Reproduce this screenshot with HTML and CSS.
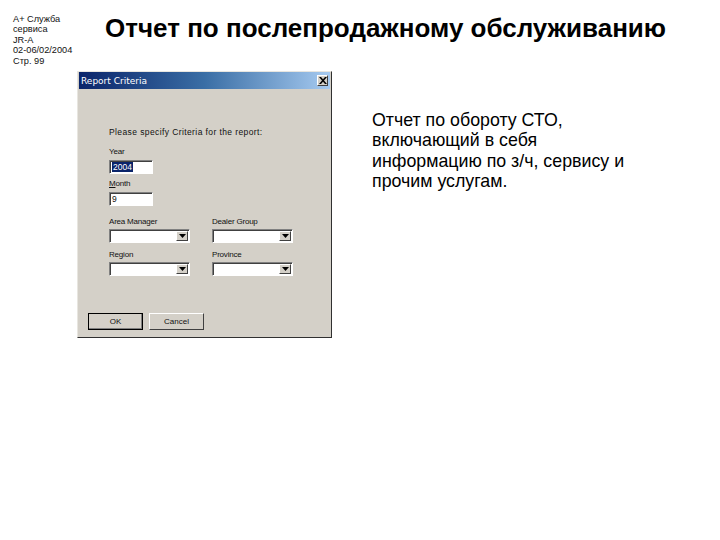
FILE: index.html
```html
<!DOCTYPE html>
<html>
<head>
<meta charset="utf-8">
<link rel="stylesheet" href="styles.css">
</head>
<body>
<div class="page">
  <header class="header">
    <div class="meta">
      <div>А+ Служба</div>
      <div>сервиса</div>
      <div>JR-A</div>
      <div>02-06/02/2004</div>
      <div>Стр. 99</div>
    </div>
    <h1 class="title">Отчет по послепродажному обслуживанию</h1>
  </header>
  <main class="content">
    <div class="dialog">
      <div class="titlebar">
        <span class="caption">Report Criteria</span>
        <span class="close">
          <svg width="8" height="7" viewBox="0 0 8 7"><path d="M0 0h2l2 2.3L6 0h2L5 3.5 8 7H6L4 4.7 2 7H0l3-3.5z" fill="#000"/></svg>
        </span>
      </div>
      <div class="dbody">
        <div class="prompt">Please specify Criteria for the report:</div>
        <div class="field">
          <label>Year</label>
          <div class="input"><span class="sel">2004</span></div>
        </div>
        <div class="field">
          <label><u>M</u>onth</label>
          <div class="input">9</div>
        </div>
        <div class="grid">
          <div class="field">
            <label>Area Manager</label>
            <div class="combo"><span class="arrow"><svg width="7" height="4" viewBox="0 0 7 4"><path d="M0 0h7L3.5 4z" fill="#000"/></svg></span></div>
          </div>
          <div class="field">
            <label>Dealer Group</label>
            <div class="combo"><span class="arrow"><svg width="7" height="4" viewBox="0 0 7 4"><path d="M0 0h7L3.5 4z" fill="#000"/></svg></span></div>
          </div>
          <div class="field">
            <label>Region</label>
            <div class="combo"><span class="arrow"><svg width="7" height="4" viewBox="0 0 7 4"><path d="M0 0h7L3.5 4z" fill="#000"/></svg></span></div>
          </div>
          <div class="field">
            <label>Province</label>
            <div class="combo"><span class="arrow"><svg width="7" height="4" viewBox="0 0 7 4"><path d="M0 0h7L3.5 4z" fill="#000"/></svg></span></div>
          </div>
        </div>
        <div class="buttons">
          <div class="btn default">OK</div>
          <div class="btn">Cancel</div>
        </div>
      </div>
    </div>
    <p class="desc">Отчет по обороту СТО, включающий в себя информацию по з/ч, сервису и прочим услугам.</p>
  </main>
</div>
</body>
</html>
```
FILE: styles.css
```css
html, body {
  margin: 0;
  padding: 0;
  background: #fff;
}
.page {
  width: 720px;
  height: 540px;
  font-family: "Liberation Sans", Arial, sans-serif;
  color: #000;
}
.header {
  display: flex;
  align-items: flex-start;
  height: 71px;
  box-sizing: border-box;
  padding: 3px 0 0 13px;
}
.meta {
  width: 92px;
  margin-top: 11px;
  font-size: 9.2px;
  line-height: 10.4px;
  color: #111;
}
.title {
  margin: 10px 0 0 0;
  font-size: 26px;
  font-weight: bold;
  line-height: 30px;
  white-space: nowrap;
}
.content {
  display: flex;
  align-items: flex-start;
  padding: 0 0 0 77px;
}
.dialog {
  width: 253px;
  height: 265px;
  background: #d4d0c8;
  border: 1px solid;
  border-color: #e8e6e0 #303030 #303030 #e8e6e0;
  display: flex;
  flex-direction: column;
}
.titlebar {
  height: 17px;
  margin: 0 1px 0 1px;
  background: linear-gradient(to right, #0a246a 0%, #3a6ea5 50%, #a6caf0 100%);
  display: flex;
  align-items: center;
  justify-content: space-between;
  padding: 0 2px 0 2px;
}
.caption {
  color: #fff;
  font-size: 9px;
  font-family: "DejaVu Sans", sans-serif;
}
.close {
  width: 11px;
  height: 11px;
  background: #d4d0c8;
  border: 1px solid;
  border-color: #fff #404040 #404040 #fff;
  display: flex;
  align-items: center;
  justify-content: center;
  box-sizing: border-box;
}
.dbody {
  padding: 38px 0 0 31px;
  font-size: 8px;
  color: #111;
  display: flex;
  flex-direction: column;
}
.prompt {
  font-size: 8.5px;
  line-height: 10px;
  margin-bottom: 9px;
  letter-spacing: 0.4px;
}
.field label {
  display: block;
  height: 11px;
  line-height: 11px;
  margin-bottom: 3px;
  letter-spacing: -0.2px;
}
.field {
  margin-bottom: 4px;
}
.input {
  width: 44px;
  height: 14px;
  background: #fff;
  border: 1px solid;
  border-color: #808080 #fff #fff #808080;
  box-sizing: border-box;
  font-size: 8.5px;
  line-height: 12px;
  padding-left: 2px;
  box-shadow: inset 1px 1px 0 #404040;
}
.sel {
  background: #0a246a;
  color: #fff;
  padding: 0 1px;
}
.grid {
  display: grid;
  grid-template-columns: 103px 81px;
  margin-top: 6px;
}
.grid .field {
  margin-bottom: 6px;
}
.grid .field label {
  margin-bottom: 2px;
}
.combo {
  width: 81px;
  height: 14px;
  background: #fff;
  border: 1px solid;
  border-color: #808080 #fff #fff #808080;
  box-sizing: border-box;
  box-shadow: inset 1px 1px 0 #404040;
  display: flex;
  justify-content: flex-end;
  padding: 1px;
}
.arrow {
  width: 12px;
  height: 10px;
  background: #d4d0c8;
  border: 1px solid;
  border-color: #fff #404040 #404040 #fff;
  box-sizing: border-box;
  display: flex;
  align-items: center;
  justify-content: center;
}
.buttons {
  display: flex;
  gap: 6px;
  margin: 31px 0 0 -21px;
}
.btn {
  width: 55px;
  height: 17px;
  box-sizing: border-box;
  border: 1px solid;
  border-color: #fff #404040 #404040 #fff;
  text-align: center;
  line-height: 15px;
  font-size: 8px;
}
.btn.default {
  outline: 1px solid #000;
  outline-offset: -1px;
  box-shadow: inset -1px -1px 0 #808080;
}
.desc {
  margin: 39px 0 0 40px;
  width: 268px;
  font-size: 17.8px;
  line-height: 20.3px;
}
```
